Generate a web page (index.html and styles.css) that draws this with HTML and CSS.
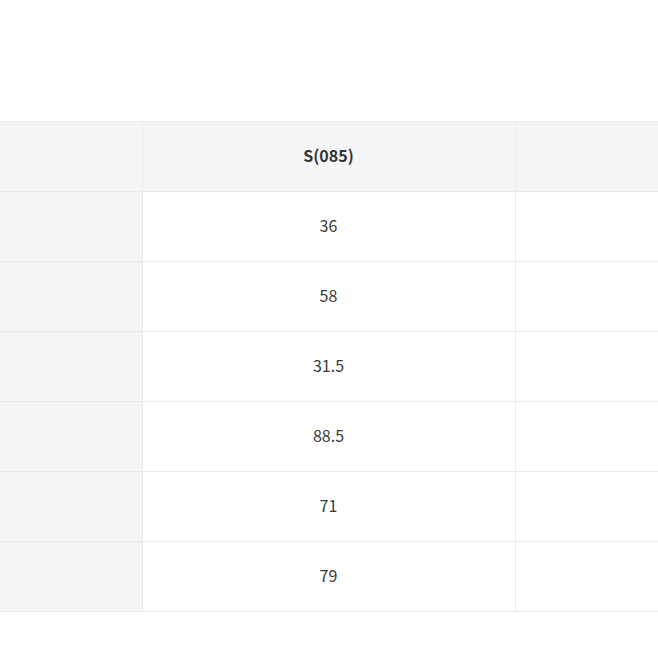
FILE: index.html
```html
<!DOCTYPE html>
<html>
<head>
<meta charset="utf-8">
<link rel="stylesheet" href="styles.css">
</head>
<body>
<div class="wrap">
<table class="size-table">
<thead>
<tr><th class="label"></th><th class="col">S(085)</th><th class="col"></th></tr>
</thead>
<tbody>
<tr><td class="label"></td><td class="col">36</td><td class="col"></td></tr>
<tr><td class="label"></td><td class="col">58</td><td class="col"></td></tr>
<tr><td class="label"></td><td class="col">31.5</td><td class="col"></td></tr>
<tr><td class="label"></td><td class="col">88.5</td><td class="col"></td></tr>
<tr><td class="label"></td><td class="col">71</td><td class="col"></td></tr>
<tr><td class="label"></td><td class="col">79</td><td class="col"></td></tr>
</tbody>
</table>
</div>
</body>
</html>
```
FILE: styles.css
```css
html, body {
  margin: 0;
  padding: 0;
  background: #fff;
}
.wrap {
  width: 658px;
  height: 658px;
  overflow: hidden;
  padding-top: 121px;
  box-sizing: border-box;
}
.size-table {
  border-collapse: collapse;
  table-layout: fixed;
  width: 888px;
  font-family: "Noto Sans CJK KR", "Open Sans", sans-serif;
  font-size: 16px;
  color: #3a3a3a;
}
.size-table th,
.size-table td {
  height: 70px;
  padding: 0 0 4px 0;
  box-sizing: border-box;
  border: 1px solid #ebebeb;
  text-align: center;
  vertical-align: middle;
}
.size-table th.label,
.size-table td.label {
  width: 142px;
  border-left: none;
  background: #f5f5f5;
}
.size-table th.col {
  width: 373px;
  background: #f5f5f5;
  font-weight: 700;
  color: #333;
}
.size-table td.col {
  width: 373px;
  background: #fff;
}
```
